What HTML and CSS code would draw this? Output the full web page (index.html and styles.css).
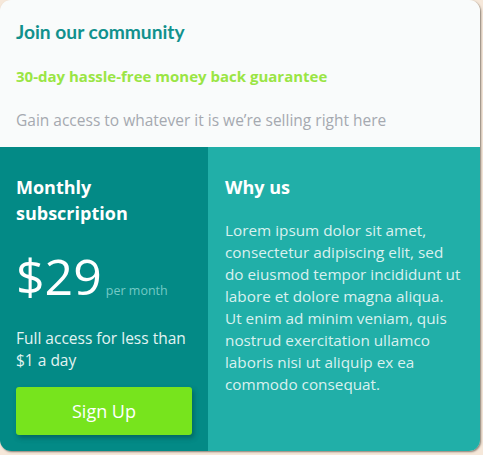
FILE: index.html
```html
<!DOCTYPE html>
<html lang="en">
<head>
<meta charset="utf-8">
<link rel="stylesheet" href="styles.css">
</head>
<body>
<main class="card">
  <section class="top">
    <h1 class="title">Join our community</h1>
    <p class="guarantee">30-day hassle-free money back guarantee</p>
    <p class="lead">Gain access to whatever it is we’re selling right here</p>
  </section>
  <div class="bottom">
    <section class="sub">
      <h2 class="heading">Monthly<br>subscription</h2>
      <div class="price"><span class="amount">$29</span><span class="per">per month</span></div>
      <p class="access">Full access for less than $1 a day</p>
      <button class="signup">Sign Up</button>
    </section>
    <section class="why">
      <h2 class="heading">Why us</h2>
      <p class="why-text">Lorem ipsum dolor sit amet, consectetur adipiscing elit, sed do eiusmod tempor incididunt ut labore et dolore magna aliqua. Ut enim ad minim veniam, quis nostrud exercitation ullamco laboris nisi ut aliquip ex ea commodo consequat.</p>
    </section>
  </div>
</main>
</body>
</html>
```
FILE: styles.css
```css
* { box-sizing: border-box; }
html, body { margin: 0; padding: 0; }
body {
  background: #f6e8da;
  font-family: "Open Sans", "Noto Sans", sans-serif;
  width: 483px;
  height: 455px;
  overflow: hidden;
}
.card {
  width: 480px;
  height: 451px;
  border-radius: 11px;
  overflow: hidden;
  display: flex;
  flex-direction: column;
  box-shadow: 1px 1px 2px rgba(90, 80, 70, 0.7);
}
.top {
  background: #f9fbfb;
  padding: 18px 16px 0;
  height: 147px;
}
.title {
  margin: 0;
  font-family: Lato, "Open Sans", sans-serif;
  font-size: 19.2px;
  font-weight: 700;
  color: #11918d;
  line-height: 28px;
}
.guarantee {
  margin: 20px 0 0;
  font-size: 15px;
  font-weight: 700;
  color: #9ae544;
  line-height: 20px;
}
.lead {
  margin: 24px 0 0;
  font-size: 15.5px;
  color: #a5a9b0;
  line-height: 20px;
}
.bottom {
  flex: 1;
  display: flex;
}
.sub {
  width: 208px;
  background: #038a86;
  padding: 27px 16px 0;
}
.heading {
  margin: 0;
  font-size: 18px;
  font-weight: 700;
  color: #fff;
  line-height: 26px;
}
.price {
  display: flex;
  align-items: baseline;
  margin-top: 14px;
  height: 72px;
}
.amount {
  font-size: 50px;
  color: #fff;
  line-height: 72px;
}
.per {
  font-size: 12.5px;
  color: #74c9c5;
  margin-left: 4px;
}
.access {
  margin: 15px 0 0;
  font-size: 15.5px;
  color: #e3f4f3;
  line-height: 22px;
}
.signup {
  margin-top: 16px;
  width: 176px;
  height: 48px;
  border: none;
  border-radius: 3px;
  background: #77e41d;
  color: #fff;
  font-family: inherit;
  font-size: 18px;
  box-shadow: 2px 3px 5px rgba(0, 60, 58, 0.45);
}
.why {
  flex: 1;
  background: #21afa8;
  padding: 27px 16px 0 17px;
}
.why-text {
  margin: 19px 0 0;
  font-size: 15.3px;
  color: #daf1ef;
  line-height: 22px;
}
```
